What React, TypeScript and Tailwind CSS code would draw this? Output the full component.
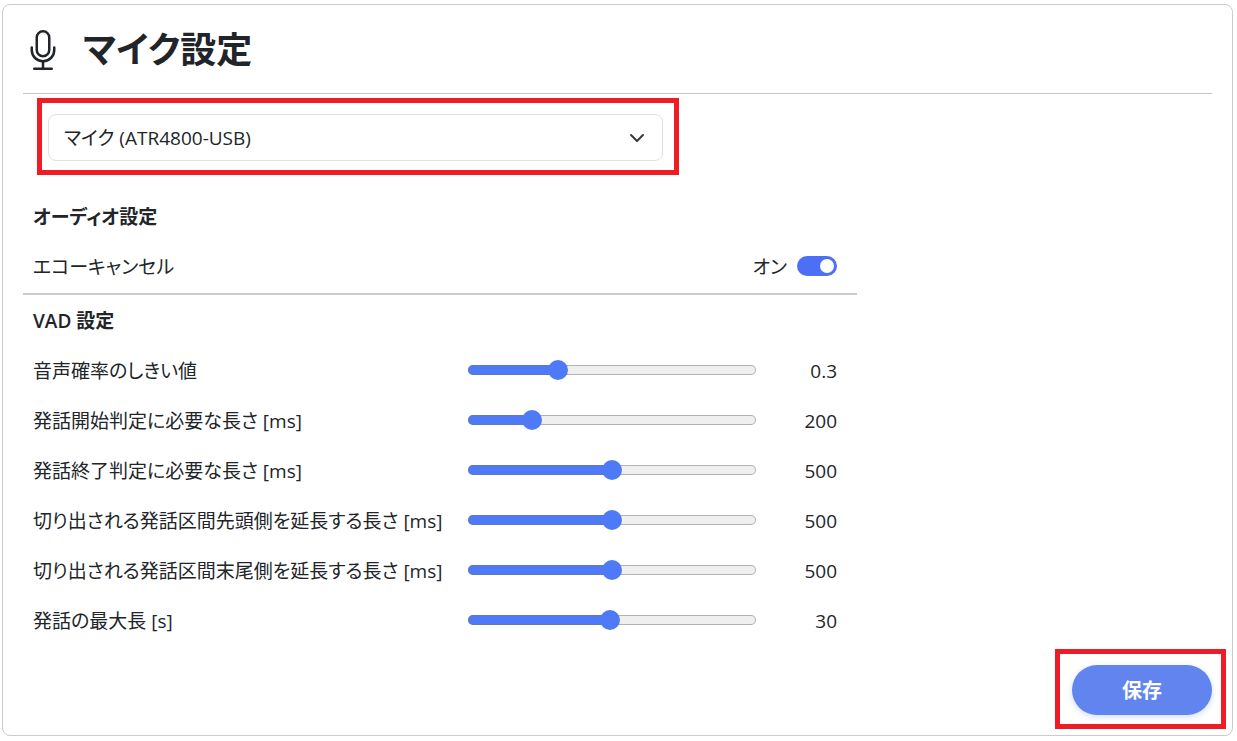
import React, { useState } from 'react';
import { BsMic } from 'react-icons/bs';

interface VadParam {
  id: string;
  label: string;
  min: number;
  max: number;
  step: number;
  value: number;
}

const VAD_PARAMS: VadParam[] = [
  { id: 'threshold', label: '音声確率のしきい値', min: 0, max: 1, step: 0.1, value: 0.3 },
  { id: 'speech-start', label: '発話開始判定に必要な長さ [ms]', min: 0, max: 1000, step: 10, value: 200 },
  { id: 'speech-end', label: '発話終了判定に必要な長さ [ms]', min: 0, max: 1000, step: 10, value: 500 },
  { id: 'pad-head', label: '切り出される発話区間先頭側を延長する長さ [ms]', min: 0, max: 1000, step: 10, value: 500 },
  { id: 'pad-tail', label: '切り出される発話区間末尾側を延長する長さ [ms]', min: 0, max: 1000, step: 10, value: 500 },
  { id: 'max-length', label: '発話の最大長 [s]', min: 1, max: 60, step: 1, value: 30 },
];

const SliderRow: React.FC<{ param: VadParam }> = ({ param }) => {
  const [value, setValue] = useState(param.value);
  const ratio = (value - param.min) / (param.max - param.min);

  return (
    <div className="flex h-[50px] items-center pl-[10px] pr-5">
      <label htmlFor={param.id} className="flex-1 whitespace-nowrap pt-[2px]">
        {param.label}
      </label>
      <input
        id={param.id}
        type="range"
        min={param.min}
        max={param.max}
        step={param.step}
        value={value}
        onChange={(e) => setValue(Number(e.target.value))}
        style={{ '--fill': `${ratio * 100}%` } as React.CSSProperties}
        className="h-5 w-72 shrink-0 cursor-pointer appearance-none bg-transparent [&::-webkit-slider-runnable-track]:h-[10px] [&::-webkit-slider-runnable-track]:rounded-full [&::-webkit-slider-runnable-track]:bg-[linear-gradient(to_right,#4f7af7_var(--fill),#efefef_var(--fill))] [&::-webkit-slider-runnable-track]:shadow-[inset_0_0_0_1px_rgba(118,118,118,0.5)] [&::-webkit-slider-thumb]:-mt-[5px] [&::-webkit-slider-thumb]:size-5 [&::-webkit-slider-thumb]:appearance-none [&::-webkit-slider-thumb]:rounded-full [&::-webkit-slider-thumb]:bg-[#4f7af7]"
      />
      <output htmlFor={param.id} className="w-[81px] pt-[2px] text-right">
        {value}
      </output>
    </div>
  );
};

export default function App() {
  const [echoCancel, setEchoCancel] = useState(true);

  return (
    <div className="min-h-screen bg-white pb-1 pl-[2px] pr-1 pt-1 font-['Open_Sans','Noto_Sans_CJK_JP',sans-serif] text-[19px] leading-7 text-[#212529] [font-feature-settings:'palt']">
      <main className="rounded-lg border border-[#ccc] pb-[6px]">
        <div className="px-5">
          {/* タイトル */}
          <header className="flex h-[89px] items-center gap-5 border-b border-[#c4c4c4] pt-[2px]">
            <BsMic size={40} />
            <h1 className="text-4xl font-semibold leading-[48px]">マイク設定</h1>
          </header>

          {/* マイク選択 */}
          <div className="ml-[14px] mt-1 w-full max-w-[642px] border-[5px] border-[#ee1c25] pb-[9px] pl-[6px] pr-[11px] pt-[11px]">
            <div className="relative">
              <select
                aria-label="マイク"
                className="block h-[47px] w-full appearance-none rounded-lg border border-[#dee2e6] bg-white pl-[15px] pr-12"
              >
                <option>マイク (ATR4800-USB)</option>
              </select>
              <svg
                viewBox="0 0 16 16"
                className="pointer-events-none absolute right-[18px] top-4 size-4"
                fill="none"
                stroke="#343a40"
                strokeWidth="2"
                strokeLinecap="round"
                strokeLinejoin="round"
              >
                <path d="m2 5 6 6 6-6" />
              </svg>
            </div>
          </div>

          {/* オーディオ設定 */}
          <section className="mt-4 w-full max-w-[834px] border-b-2 border-[#ccc] pb-[2px]">
            <h2 className="flex h-[50px] items-center pl-[10px] pt-[2px] font-semibold">オーディオ設定</h2>
            <div className="flex h-[50px] items-center justify-between pl-[10px] pr-5">
              <label htmlFor="echo-cancel" className="pt-[2px]">
                エコーキャンセル
              </label>
              <div className="flex items-center gap-[10px]">
                <span className="pt-[2px]">{echoCancel ? 'オン' : 'オフ'}</span>
                <input
                  id="echo-cancel"
                  type="checkbox"
                  role="switch"
                  checked={echoCancel}
                  onChange={(e) => setEchoCancel(e.target.checked)}
                  className="flex h-5 w-10 cursor-pointer appearance-none items-center rounded-full bg-[#adb5bd] px-[3px] before:size-[14px] before:rounded-full before:bg-white checked:justify-end checked:bg-[#4c6ff5]"
                />
              </div>
            </div>
          </section>

          {/* VAD 設定 */}
          <section className="w-full max-w-[834px]">
            <h2 className="flex h-[50px] items-center pl-[10px] pt-[2px] font-semibold">VAD 設定</h2>
            {VAD_PARAMS.map((param) => (
              <SliderRow key={param.id} param={param} />
            ))}
          </section>
        </div>

        {/* 保存 */}
        <div className="mr-[6px] mt-1 flex justify-end">
          <div className="border-[5px] border-[#ee1c25] pb-[9px] pl-3 pr-[9px] pt-[11px]">
            <button
              type="button"
              className="block h-[50px] w-[140px] cursor-pointer rounded-full bg-[#6184ee] pt-[2px] text-xl font-semibold text-white shadow-[0_2px_6px_rgba(79,122,247,0.25)]"
            >
              保存
            </button>
          </div>
        </div>
      </main>
    </div>
  );
}
